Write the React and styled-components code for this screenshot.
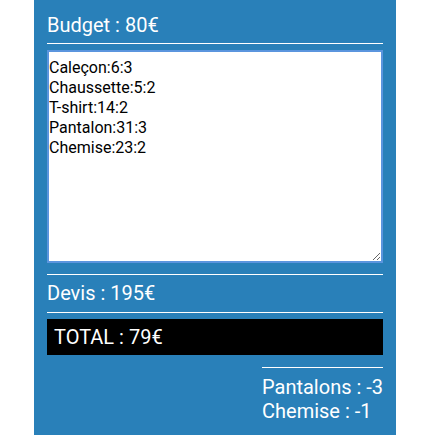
import React, { useState } from "react";
import styled, { createGlobalStyle } from "styled-components";

const GlobalStyle = createGlobalStyle`
  body {
    margin: 0;
    background: #ffffff;
    font-family: Roboto, "Liberation Sans", sans-serif;
  }
`;

function App() {
  const [list, setList] = useState(
    "Caleçon:6:3\nChaussette:5:2\nT-shirt:14:2\nPantalon:31:3\nChemise:23:2"
  );

  const missing = [
    { name: "Pantalons", count: -3 },
    { name: "Chemise", count: -1 },
  ];

  return (
    <>
      <GlobalStyle />
      <Panel>
        <Title>Budget : 80€</Title>
        <Rule />
        <ListInput value={list} onChange={(e) => setList(e.target.value)} />
        <Rule $top={11} />
        <Title>Devis : 195€</Title>
        <Rule />
        <Total>TOTAL : 79€</Total>
        <Missing>
          <Rule $bottom={8} />
          {missing.map(({ name, count }) => (
            <Line key={name}>
              {name} : {count}
            </Line>
          ))}
        </Missing>
      </Panel>
    </>
  );
}

const Panel = styled.section`
  width: 362px;
  margin: 0 auto;
  box-sizing: border-box;
  padding: 13px 13px 12px;
  background-color: #2980b9;
  color: #ffffff;
  display: flex;
  flex-direction: column;
`;

const Title = styled.div`
  font-size: 20px;
  line-height: 23.4px;
  margin-top: 1px;
`;

const Rule = styled.div`
  height: 1px;
  background: #ffffff;
  margin-top: ${({ $top }) => ($top ?? 6)}px;
  margin-bottom: ${({ $bottom }) => ($bottom ?? 6)}px;
`;

const ListInput = styled.textarea`
  display: block;
  width: 100%;
  height: 213px;
  box-sizing: border-box;
  border: 2px solid #5b95de;
  padding: 6px 0 0 0;
  margin: 0;
  font-family: Roboto, "Liberation Sans", sans-serif;
  font-size: 16px;
  line-height: 20px;
  color: #000000;
  background: #ffffff;
  outline: none;
`;

const Total = styled.div`
  background: #000000;
  color: #ffffff;
  font-size: 20px;
  line-height: 23.4px;
  padding: 7px 7px 6px;
  margin-bottom: 6px;
`;

const Missing = styled.div`
  align-self: flex-end;
  width: 121px;
`;

const Line = styled.div`
  font-size: 20px;
  line-height: 23.4px;
  white-space: nowrap;
`;

export default App;
